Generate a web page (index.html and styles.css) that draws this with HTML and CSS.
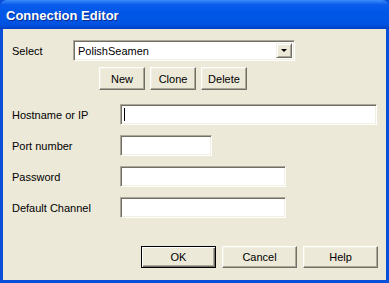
FILE: index.html
```html
<!DOCTYPE html>
<html lang="en">
<head>
  <meta charset="UTF-8" />
  <title>Connection Editor</title>
  <link rel="stylesheet" href="styles.css">
</head>
<body>
  <div class="window">
    <div class="titlebar">Connection Editor</div>

    <div class="client">
      <div class="row select-row">
        <span class="label label-short">Select</span>
        <div class="combo">
          <span class="combo-text">PolishSeamen</span>
          <span class="combo-arrow"></span>
        </div>
      </div>

      <div class="row tool-buttons">
        <button class="btn btn-small">New</button>
        <button class="btn btn-small">Clone</button>
        <button class="btn btn-small">Delete</button>
      </div>

      <div class="fields">
        <div class="row">
          <span class="label">Hostname or IP</span>
          <div class="edit edit-wide"><span class="caret"></span></div>
        </div>
        <div class="row">
          <span class="label">Port number</span>
          <div class="edit edit-port"></div>
        </div>
        <div class="row">
          <span class="label">Password</span>
          <div class="edit edit-mid"></div>
        </div>
        <div class="row">
          <span class="label">Default Channel</span>
          <div class="edit edit-mid"></div>
        </div>
      </div>

      <div class="row dialog-buttons">
        <button class="btn btn-default">OK</button>
        <button class="btn">Cancel</button>
        <button class="btn">Help</button>
      </div>
    </div>
  </div>
</body>
</html>
```

FILE: styles.css
```css
* {
  box-sizing: border-box;
}

body {
  margin: 0;
  font-family: 'Liberation Sans', Arial, sans-serif;
  font-size: 11px;
  color: #000;
  background: #ece9d8;
}

.window {
  width: 389px;
  height: 283px;
  display: flex;
  flex-direction: column;
  background: #0a4fd8;
}

.titlebar {
  height: 29px;
  flex-shrink: 0;
  padding: 0 0 0 6px;
  display: flex;
  align-items: center;
  padding-top: 2px;
  color: #fff;
  font-weight: bold;
  font-size: 13px;
  text-shadow: 1px 1px 0 #0a2a8a;
  border-radius: 7px 7px 0 0;
  background: linear-gradient(to bottom, #3a8cf8 0%, #2a7af5 6%, #0a5ceb 16%, #0058e8 40%, #0055e5 70%, #0050de 88%, #0040c0 100%);
}

.client {
  flex: 1;
  margin: 0 3px 3px 3px;
  background: #ece9d8;
  padding: 11px 8px 0 9px;
  display: flex;
  flex-direction: column;
}

.row {
  display: flex;
  align-items: center;
}

.label {
  width: 108px;
  flex-shrink: 0;
}

.label-short {
  width: 61px;
}

/* combo box */
.combo {
  width: 222px;
  height: 21px;
  background: #fff;
  border: 1px solid;
  border-color: #aca899 #fff #fff #aca899;
  box-shadow: inset 1px 1px 0 #716f64, inset -1px -1px 0 #f1efe2;
  display: flex;
  align-items: center;
  padding: 2px 2px 2px 4px;
}

.combo-text {
  flex: 1;
}

.combo-arrow {
  width: 16px;
  height: 15px;
  background: #ece9d8;
  border: 1px solid;
  border-color: #f1efe2 #716f64 #716f64 #f1efe2;
  box-shadow: inset 1px 1px 0 #fff, inset -1px -1px 0 #aca899;
  position: relative;
}

.combo-arrow::after {
  content: "";
  position: absolute;
  left: 4px;
  top: 5px;
  border-left: 3px solid transparent;
  border-right: 3px solid transparent;
  border-top: 3px solid #000;
}

/* buttons */
.btn {
  font-family: 'Liberation Sans', Arial, sans-serif;
  font-size: 11px;
  color: #000;
  width: 75px;
  height: 22px;
  padding: 0;
  background: #ece9d8;
  border: 1px solid;
  border-color: #fff #716f64 #716f64 #fff;
  box-shadow: inset -1px -1px 0 #aca899, inset 1px 1px 0 #f1efe2;
}

.btn-small {
  width: 46px;
  height: 23px;
}

.btn-default {
  border-color: #000;
  box-shadow: inset 1px 1px 0 #fff, inset -1px -1px 0 #716f64, inset -2px -2px 0 #aca899;
}

.tool-buttons {
  margin: 6px 0 0 87px;
  gap: 5px;
}

/* edit boxes */
.fields {
  margin-top: 14px;
  display: flex;
  flex-direction: column;
  gap: 10px;
}

.edit {
  height: 21px;
  background: #fff;
  border: 1px solid;
  border-color: #aca899 #fff #fff #aca899;
  box-shadow: inset 1px 1px 0 #716f64, inset -1px -1px 0 #f1efe2;
  padding: 3px 0 0 3px;
}

.edit-wide {
  width: 257px;
}

.edit-port {
  width: 92px;
}

.edit-mid {
  width: 166px;
}

.caret {
  display: block;
  width: 1px;
  height: 13px;
  background: #000;
}

.dialog-buttons {
  margin-top: auto;
  margin-bottom: 12px;
  justify-content: flex-end;
  gap: 6px;
}
```
